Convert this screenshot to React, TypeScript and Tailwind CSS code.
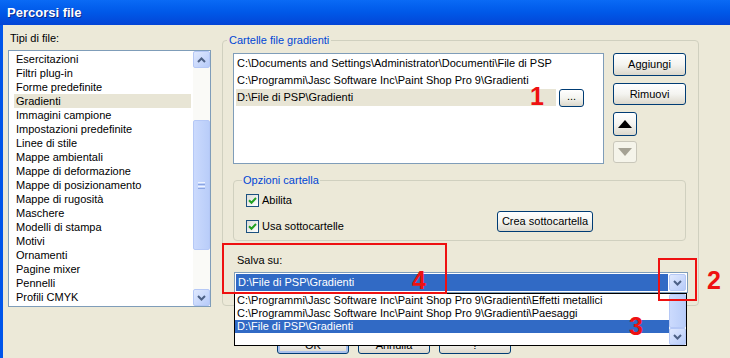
import React from 'react';

const types = [
  'Esercitazioni',
  'Filtri plug-in',
  'Forme predefinite',
  'Gradienti',
  'Immagini campione',
  'Impostazioni predefinite',
  'Linee di stile',
  'Mappe ambientali',
  'Mappe di deformazione',
  'Mappe di posizionamento',
  'Mappe di rugosità',
  'Maschere',
  'Modelli di stampa',
  'Motivi',
  'Ornamenti',
  'Pagine mixer',
  'Pennelli',
  'Profili CMYK',
];

function Chevron({ up }: { up?: boolean }) {
  return (
    <svg width="9" height="6" viewBox="0 0 9 6">
      <path d={up ? 'M1 5 L4.5 1.5 L8 5' : 'M1 1 L4.5 4.5 L8 1'} fill="none" stroke="#4d6185" strokeWidth="2" />
    </svg>
  );
}

function ScrollBtn({ up }: { up?: boolean }) {
  return (
    <div className="h-[17px] w-[17px] shrink-0 rounded-[2px] border border-[#b5c8f6] bg-gradient-to-br from-[#e0e9fe] to-[#b7cbf9] flex items-center justify-center">
      <Chevron up={up} />
    </div>
  );
}

function Thumb({ className, grip = true }: { className: string; grip?: boolean }) {
  return (
    <div className={`w-[17px] rounded-[2px] border border-[#b5c8f6] bg-gradient-to-r from-[#cbdafd] to-[#b9cdf9] flex flex-col items-center justify-center gap-[1px] ${className}`}>
      {grip && (
        <>
          <div className="w-[7px] h-[1px] bg-[#eef3fe]" />
          <div className="w-[7px] h-[1px] bg-[#8ca6e3]" />
          <div className="w-[7px] h-[1px] bg-[#eef3fe]" />
          <div className="w-[7px] h-[1px] bg-[#8ca6e3]" />
        </>
      )}
    </div>
  );
}

function XpButton({ children, className }: { children?: React.ReactNode; className: string }) {
  return (
    <div className={`flex items-center justify-center rounded-[3px] border border-[#003c74] bg-gradient-to-b from-[#ffffff] via-[#f4f4f0] to-[#dcd8cc] ${className}`}>
      {children}
    </div>
  );
}

function Check({ label }: { label: string }) {
  return (
    <div className="flex items-center h-[13px]">
      <div className="w-[13px] h-[13px] border border-[#1c5180] bg-gradient-to-br from-[#dcdcd7] to-white flex items-center justify-center">
        <svg width="9" height="9" viewBox="0 0 9 9">
          <path d="M1 4.2 L3.5 6.7 L8 2" fill="none" stroke="#21a121" strokeWidth="2" />
        </svg>
      </div>
      <span className="ml-[3px] leading-[13px]">{label}</span>
    </div>
  );
}

export default function App() {
  return (
    <div className="relative w-[730px] h-[358px] overflow-hidden bg-[#ece9d8] flex flex-col text-[11px] text-black font-['Liberation_Sans',Arial,sans-serif]">
      <div className="h-[25px] shrink-0 bg-gradient-to-b from-[#0a6af5] via-[#0058e8] to-[#0345d6] flex items-center pl-[7px]">
        <span className="text-white font-bold text-[13px] [text-shadow:1px_1px_0_#0a2a8a]">Percorsi file</span>
      </div>

      <div className="flex-1 flex border-l-[3px] border-[#0055ea]">
        {/* left: file types */}
        <div className="w-[219px] shrink-0 pl-[5px] pt-[7px]">
          <div className="h-[13px] leading-[13px] pl-[2px]">Tipi di file:</div>
          <div className="mt-[5px] w-[203px] h-[257px] border border-[#7f9db9] bg-white flex">
            <div className="flex-1 pt-[1px] pl-[5px]">
              {types.map((t) => (
                <div
                  key={t}
                  className={`h-[14px] leading-[14px] pl-[2px] w-[177px] ${t === 'Gradienti' ? 'bg-[#e8e5d5]' : ''}`}
                >
                  {t}
                </div>
              ))}
            </div>
            <div className="w-[17px] flex flex-col bg-[#fafaf7]">
              <ScrollBtn up />
              <Thumb className="mt-[52px] h-[130px]" />
              <div className="flex-1" />
              <ScrollBtn />
            </div>
          </div>
        </div>

        {/* right: folders */}
        <div className="flex flex-col">
          <fieldset className="mt-[9px] w-[477px] h-[272px] border border-[#d0d0bf] rounded-[4px]">
            <legend className="ml-[4px] px-[2px] leading-[13px] text-[#0046d5]">Cartelle file gradienti</legend>
            <div className="pl-[10px] pt-[6px] flex flex-col">
              <div className="flex">
                <div className="w-[371px] h-[111px] border border-[#7f9db9] bg-white pt-[1px]">
                  <div className="h-[17px] leading-[17px] pl-[3px]">
                    C:\Documents and Settings\Administrator\Documenti\File di PSP
                  </div>
                  <div className="h-[17px] leading-[17px] pl-[3px]">
                    C:\Programmi\Jasc Software Inc\Paint Shop Pro 9\Gradienti
                  </div>
                  <div className="h-[17px] flex items-center">
                    <div className="ml-[2px] w-[320px] h-[17px] leading-[17px] pl-[1px] bg-[#e8e5d5]">
                      D:\File di PSP\Gradienti
                    </div>
                    <XpButton className="ml-[3px] w-[25px] h-[18px] leading-none pb-[3px]">...</XpButton>
                  </div>
                </div>
                <div className="ml-[9px] w-[73px] flex flex-col">
                  <XpButton className="h-[23px] w-[73px]">Aggiungi</XpButton>
                  <XpButton className="mt-[7px] h-[22px] w-[73px]">Rimuovi</XpButton>
                  <XpButton className="mt-[7px] h-[24px] w-[24px]">
                    <svg width="14" height="8" viewBox="0 0 14 8">
                      <path d="M0 8 L7 0 L14 8 Z" fill="#000" />
                    </svg>
                  </XpButton>
                  <div className="mt-[5px] h-[22px] w-[24px] rounded-[3px] border border-[#c9c7ba] bg-[#f5f4ea] flex items-center justify-center">
                    <svg width="14" height="8" viewBox="0 0 14 8">
                      <path d="M0 0 L14 0 L7 8 Z" fill="#a5a294" />
                    </svg>
                  </div>
                </div>
              </div>

              <fieldset className="mt-[10px] w-[453px] h-[67px] border border-[#d0d0bf] rounded-[4px]">
                <legend className="ml-[8px] px-[1px] leading-[13px] text-[#0046d5]">Opzioni cartella</legend>
                <div className="flex pl-[12px]">
                  <div className="pt-[7px] flex flex-col">
                    <Check label="Abilita" />
                    <div className="mt-[13px]">
                      <Check label="Usa sottocartelle" />
                    </div>
                  </div>
                  <XpButton className="ml-auto mr-[92px] mt-[24px] w-[96px] h-[21px]">Crea sottocartella</XpButton>
                </div>
              </fieldset>

              <div className="mt-[13px] ml-[4px] h-[13px] leading-[13px]">Salva su:</div>
              <div className="relative mt-[5px] ml-[1px] w-[454px] h-[21px] border border-[#7f9db9] bg-white p-[1px] flex">
                <div className="flex-1 h-[17px] leading-[17px] pl-[2px] bg-[#316ac5] text-white">D:\File di PSP\Gradienti</div>
                <div className="ml-[1px]">
                  <ScrollBtn />
                </div>

                {/* open dropdown list */}
                <div className="absolute left-[-1px] top-[20px] w-[453px] h-[53px] border border-black bg-white flex">
                  <div className="flex-1 flex flex-col">
                    <div className="h-[13px] leading-[13px] pl-[2px]">
                      C:\Programmi\Jasc Software Inc\Paint Shop Pro 9\Gradienti\Effetti metallici
                    </div>
                    <div className="h-[13px] leading-[13px] pl-[2px]">
                      C:\Programmi\Jasc Software Inc\Paint Shop Pro 9\Gradienti\Paesaggi
                    </div>
                    <div className="h-[13px] leading-[13px] pl-[2px] bg-[#316ac5] text-white">D:\File di PSP\Gradienti</div>
                  </div>
                  <div className="w-[17px] flex flex-col bg-[#fafaf7]">
                    <Thumb className="h-[34px]" grip={false} />
                    <div className="flex-1" />
                    <ScrollBtn />
                  </div>
                </div>
              </div>
            </div>
          </fieldset>

          <div className="mt-[27px] ml-[55px] flex gap-[9px]">
            <XpButton className="w-[72px] h-[21px] pt-[4px] shadow-[inset_0_0_0_2px_#a9c0ec]">OK</XpButton>
            <XpButton className="w-[72px] h-[21px] pt-[4px]">Annulla</XpButton>
            <XpButton className="w-[72px] h-[21px] pt-[4px]">?</XpButton>
          </div>
        </div>
      </div>

      {/* red annotations */}
      <div className="absolute left-[222px] top-[243px] w-[225px] h-[51px] border-2 border-[#ee1111]" />
      <div className="absolute left-[658px] top-[258px] w-[39px] h-[43px] border-2 border-[#ee1111]" />
      <span className="absolute left-[530px] top-[84px] text-[25px] leading-[25px] font-bold text-[#ee1111]">1</span>
      <span className="absolute left-[707px] top-[268px] text-[25px] leading-[25px] font-bold text-[#ee1111]">2</span>
      <span className="absolute left-[629px] top-[314px] text-[25px] leading-[25px] font-bold text-[#ee1111]">3</span>
      <span className="absolute left-[412px] top-[268px] text-[25px] leading-[25px] font-bold text-[#ee1111]">4</span>
    </div>
  );
}
